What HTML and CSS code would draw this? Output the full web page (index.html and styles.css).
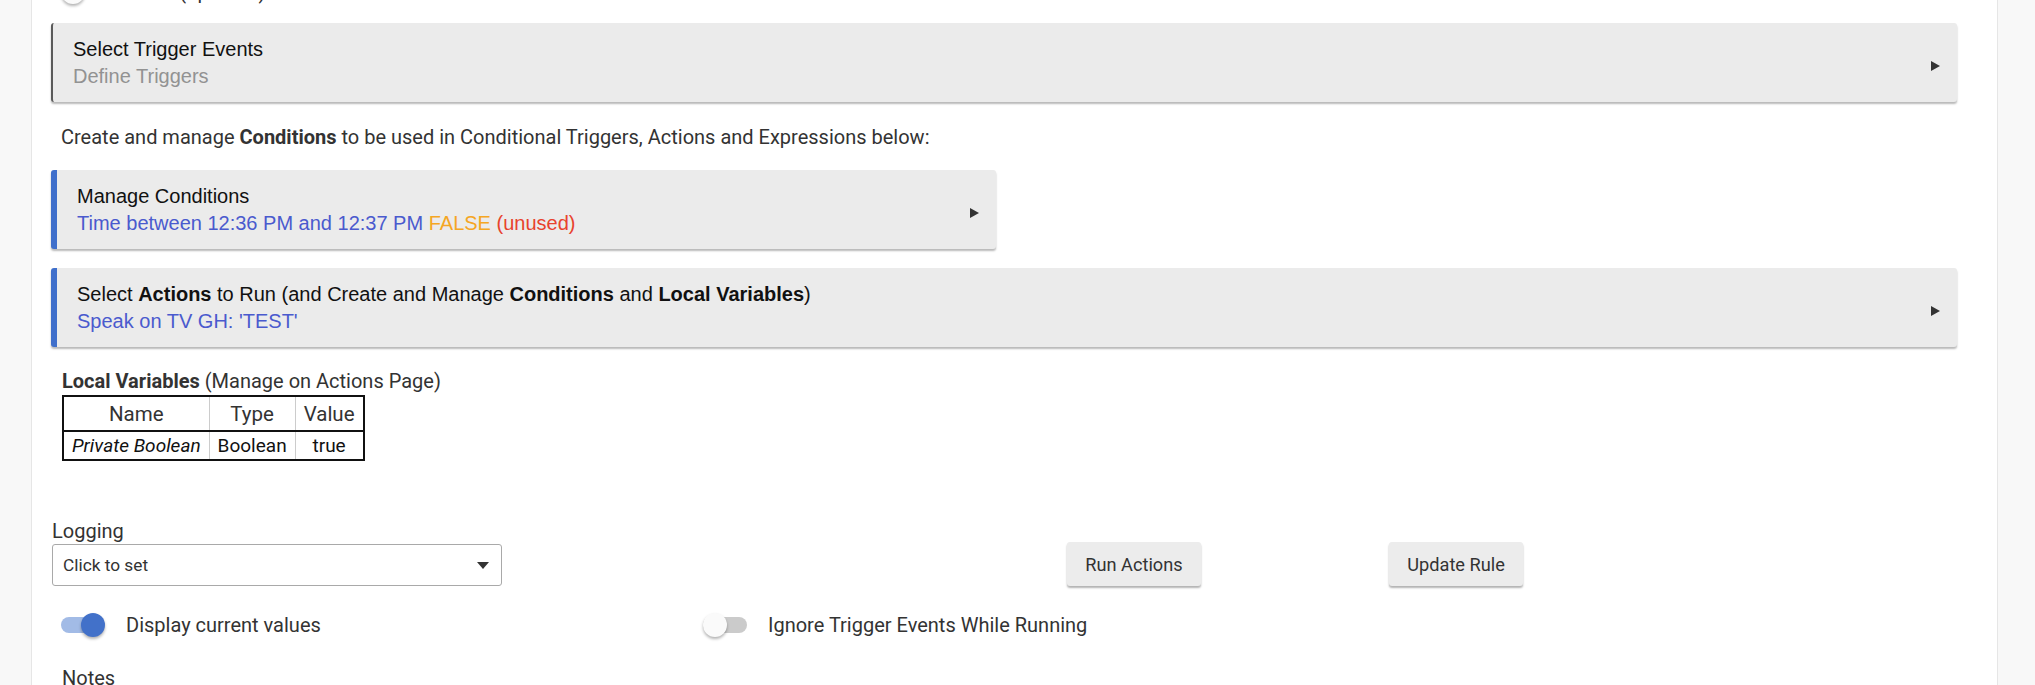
FILE: index.html
```html
<!DOCTYPE html>
<html lang="en">
<head>
    <meta charset="UTF-8">
    <meta name="viewport" content="width=device-width, initial-scale=1.0">
    <title>Edit Rule</title>
    <link rel="stylesheet" href="styles.css">
</head>
<body>
    <div class="panel">
        <div class="switch-row cut-row">
            <span class="switch"></span>
            <span class="switch-label">Label (optional)</span>
        </div>

        <a class="card card-plain" href="#">
            <div class="card-text">
                <div class="card-title">Select Trigger Events</div>
                <div class="card-sub muted">Define Triggers</div>
            </div>
            <span class="arrow"></span>
        </a>

        <p class="intro">Create and manage <b>Conditions</b> to be used in Conditional Triggers, Actions and Expressions below:</p>

        <a class="card card-blue card-half" href="#">
            <div class="card-text">
                <div class="card-title">Manage Conditions</div>
                <div class="card-sub"><span class="blue">Time between 12:36 PM and 12:37 PM</span> <span class="orange">FALSE</span> <span class="red">(unused)</span></div>
            </div>
            <span class="arrow"></span>
        </a>

        <a class="card card-blue" href="#">
            <div class="card-text">
                <div class="card-title">Select <b>Actions</b> to Run (and Create and Manage <b>Conditions</b> and <b>Local Variables</b>)</div>
                <div class="card-sub blue">Speak on TV GH: 'TEST'</div>
            </div>
            <span class="arrow"></span>
        </a>

        <div class="vars">
            <div class="vars-label"><b>Local Variables</b> (Manage on Actions Page)</div>
            <table class="vars-table">
                <tr><th>Name</th><th>Type</th><th>Value</th></tr>
                <tr><td><i>Private Boolean</i></td><td>Boolean</td><td>true</td></tr>
            </table>
        </div>

        <div class="controls">
            <div class="field">
                <div class="field-label">Logging</div>
                <div class="select">
                    <span>Click to set</span>
                    <span class="caret"></span>
                </div>
            </div>
            <div><button class="btn">Run Actions</button></div>
            <div><button class="btn">Update Rule</button></div>
        </div>

        <div class="switches">
            <div class="switch-row">
                <span class="switch on"></span>
                <span class="switch-label">Display current values</span>
            </div>
            <div class="switch-row">
                <span class="switch"></span>
                <span class="switch-label">Ignore Trigger Events While Running</span>
            </div>
        </div>

        <div class="notes-label">Notes</div>
    </div>
</body>
</html>
```

FILE: styles.css
```css
body {
    margin: 0;
    height: 685px;
    overflow: hidden;
    background-color: #f8f8f8;
    font-family: Roboto, "Noto Sans", sans-serif;
    font-size: 20px;
    line-height: 26px;
    color: #333;
}
.panel {
    display: flow-root;
    margin: 0 37px 0 31px;
    height: 100%;
    background-color: #fff;
    border-left: 1px solid #e6e6e6;
    border-right: 1px solid #e6e6e6;
    padding: 0 40px 0 19px;
}

/* switches */
.switch-row {
    display: flex;
    align-items: center;
    height: 26px;
    padding-left: 10px;
}
.cut-row {
    margin-top: -21px;
    margin-bottom: 1px;
}
.switch {
    position: relative;
    width: 44px;
    height: 24px;
    flex-shrink: 0;
}
.switch::before {
    content: "";
    position: absolute;
    left: 0;
    top: 4px;
    width: 44px;
    height: 16px;
    border-radius: 8px;
    background-color: #cbcbcb;
}
.switch::after {
    content: "";
    position: absolute;
    left: 0;
    top: 0;
    width: 24px;
    height: 24px;
    border-radius: 50%;
    background-color: #fafafa;
    box-shadow: 0 2px 3px rgba(0, 0, 0, 0.3);
}
.switch.on::before {
    width: 42px;
    background-color: #a2bbe6;
}
.switch.on::after {
    left: 20px;
    background-color: #4271c9;
}
.switch-label {
    margin-left: 21px;
    white-space: nowrap;
}

/* cards */
.card {
    display: flex;
    justify-content: space-between;
    align-items: center;
    box-sizing: border-box;
    height: 79px;
    margin-top: 18px;
    padding: 0 17px 0 20px;
    background-color: #ebebeb;
    border-radius: 3px;
    box-shadow: 0 2px 2px rgba(0, 0, 0, 0.28);
    text-decoration: none;
    font-family: "Liberation Sans", Arial, sans-serif;
    font-size: 20px;
    color: #111;
}
.card-plain {
    border-left: 2px solid #5a5a5a;
}
.card-blue {
    border-left: 6px solid #3f6fcb;
}
.card-half {
    width: 945px;
    margin-top: 20px;
}
.card-half + .card {
    margin-top: 19px;
}
.card-title,
.card-sub {
    line-height: 27px;
}
.card-text {
    padding-top: 1px;
}
.muted {
    color: #929292;
}
.blue {
    color: #4a5ace;
}
.orange {
    color: #f5a623;
}
.red {
    color: #e8432d;
}
.arrow {
    width: 0;
    height: 0;
    margin-top: 7px;
    border-left: 9px solid #333;
    border-top: 5px solid transparent;
    border-bottom: 5px solid transparent;
}

.intro {
    margin: 22px 0 0 10px;
}

/* local variables */
.vars {
    margin: 21px 0 0 11px;
}
.vars-table {
    border-collapse: collapse;
    border: 2px solid #111;
    margin-top: 1px;
}
.vars-table th {
    font-weight: normal;
    font-size: 20.5px;
    height: 33px;
    padding: 0 8px;
    border-bottom: 2px solid #111;
    border-left: 1px solid #ccc;
}
.vars-table td {
    height: 27px;
    padding: 0 8px;
    font-size: 19px;
    text-align: center;
    color: #111;
    border-left: 1px solid #ccc;
}

/* logging + buttons */
.controls {
    display: grid;
    grid-template-columns: 1015px 322px auto;
    align-items: end;
    margin-top: 57px;
    padding-left: 1px;
}
.select {
    display: flex;
    justify-content: space-between;
    align-items: center;
    box-sizing: border-box;
    width: 450px;
    height: 42px;
    padding: 0 12px 0 10px;
    border: 1px solid #a9a9a9;
    border-radius: 3px;
    font-size: 17.3px;
}
.caret {
    width: 0;
    height: 0;
    border-top: 7px solid #333;
    border-left: 6px solid transparent;
    border-right: 6px solid transparent;
}
.btn {
    width: 134px;
    height: 44px;
    border: none;
    border-radius: 3px;
    background-color: #ececec;
    box-shadow: 0 2px 2px rgba(0, 0, 0, 0.3);
    font-family: Roboto, sans-serif;
    font-size: 18.2px;
    color: #333;
    cursor: pointer;
}

.switches {
    display: grid;
    grid-template-columns: 642px auto;
    margin-top: 26px;
}
.notes-label {
    margin: 27px 0 0 11px;
}
```
